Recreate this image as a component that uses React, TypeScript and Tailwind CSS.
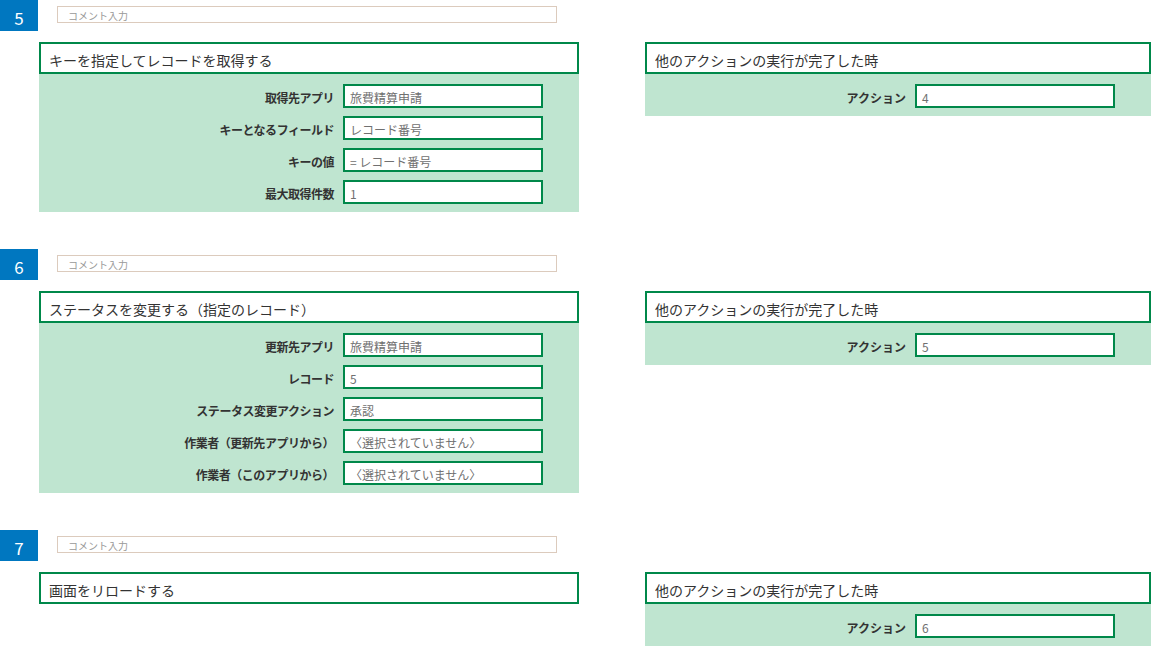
import React from "react";

const FONT = { fontFamily: '"Noto Sans CJK JP", "Noto Sans", sans-serif' };

type Row = { label: string; value: string };

function Field({ value }: { value: string }) {
  return (
    <div className="flex h-[24px] w-[200px] items-center border-2 border-[#00884a] bg-white pl-[5px] pt-[3px] text-[12px] leading-none text-[#707070]">
      {value}
    </div>
  );
}

function Header({ title }: { title: string }) {
  return (
    <div className="flex h-[32px] items-center border-2 border-[#00884a] bg-white pl-[8px] pt-[4px] text-[14px] leading-none text-[#333]">
      {title}
    </div>
  );
}

function LeftCard({ title, rows }: { title: string; rows: Row[] }) {
  return (
    <div className="w-[540px]">
      <Header title={title} />
      {rows.length > 0 && (
        <div className="flex flex-col gap-[8px] bg-[#bfe5d0] pb-[8px] pt-[10px]">
          {rows.map((r) => (
            <div key={r.label} className="flex items-center">
              <div className="w-[304px] whitespace-nowrap pr-[9px] pt-[3px] text-right text-[12px] font-bold leading-none tracking-[-0.04em] text-[#333]">
                {r.label}
              </div>
              <Field value={r.value} />
            </div>
          ))}
        </div>
      )}
    </div>
  );
}

function RightCard({ value }: { value: string }) {
  return (
    <div className="w-[506px]">
      <Header title="他のアクションの実行が完了した時" />
      <div className="flex items-center bg-[#bfe5d0] pb-[8px] pt-[10px]">
        <div className="w-[270px] whitespace-nowrap pr-[9px] pt-[3px] text-right text-[12px] font-bold leading-none text-[#333]">
          アクション
        </div>
        <Field value={value} />
      </div>
    </div>
  );
}

function Section({
  num,
  title,
  rows,
  action,
}: {
  num: string;
  title: string;
  rows: Row[];
  action: string;
}) {
  return (
    <div>
      <div className="flex items-start">
        <div className="flex h-[31px] w-[38px] items-center justify-center bg-[#0077c0] pt-[3px] text-[17px] leading-none text-white">
          {num}
        </div>
        <div className="ml-[19px] mt-[6px] flex h-[17px] w-[500px] items-end overflow-hidden border border-[#dccbbd] pl-[10px] text-[10px] leading-[12px] text-[#999]">
          コメント入力
        </div>
      </div>
      <div className="mt-[11px] flex items-start pl-[39px]">
        <LeftCard title={title} rows={rows} />
        <div className="ml-[66px]">
          <RightCard value={action} />
        </div>
      </div>
    </div>
  );
}

export default function App() {
  return (
    <div className="flex h-[650px] w-[1153px] flex-col gap-[37px] overflow-hidden bg-white" style={FONT}>
      <Section
        num="5"
        title="キーを指定してレコードを取得する"
        rows={[
          { label: "取得先アプリ", value: "旅費精算申請" },
          { label: "キーとなるフィールド", value: "レコード番号" },
          { label: "キーの値", value: "= レコード番号" },
          { label: "最大取得件数", value: "1" },
        ]}
        action="4"
      />
      <Section
        num="6"
        title="ステータスを変更する（指定のレコード）"
        rows={[
          { label: "更新先アプリ", value: "旅費精算申請" },
          { label: "レコード", value: "5" },
          { label: "ステータス変更アクション", value: "承認" },
          { label: "作業者（更新先アプリから）", value: "〈選択されていません〉" },
          { label: "作業者（このアプリから）", value: "〈選択されていません〉" },
        ]}
        action="5"
      />
      <Section num="7" title="画面をリロードする" rows={[]} action="6" />
    </div>
  );
}
